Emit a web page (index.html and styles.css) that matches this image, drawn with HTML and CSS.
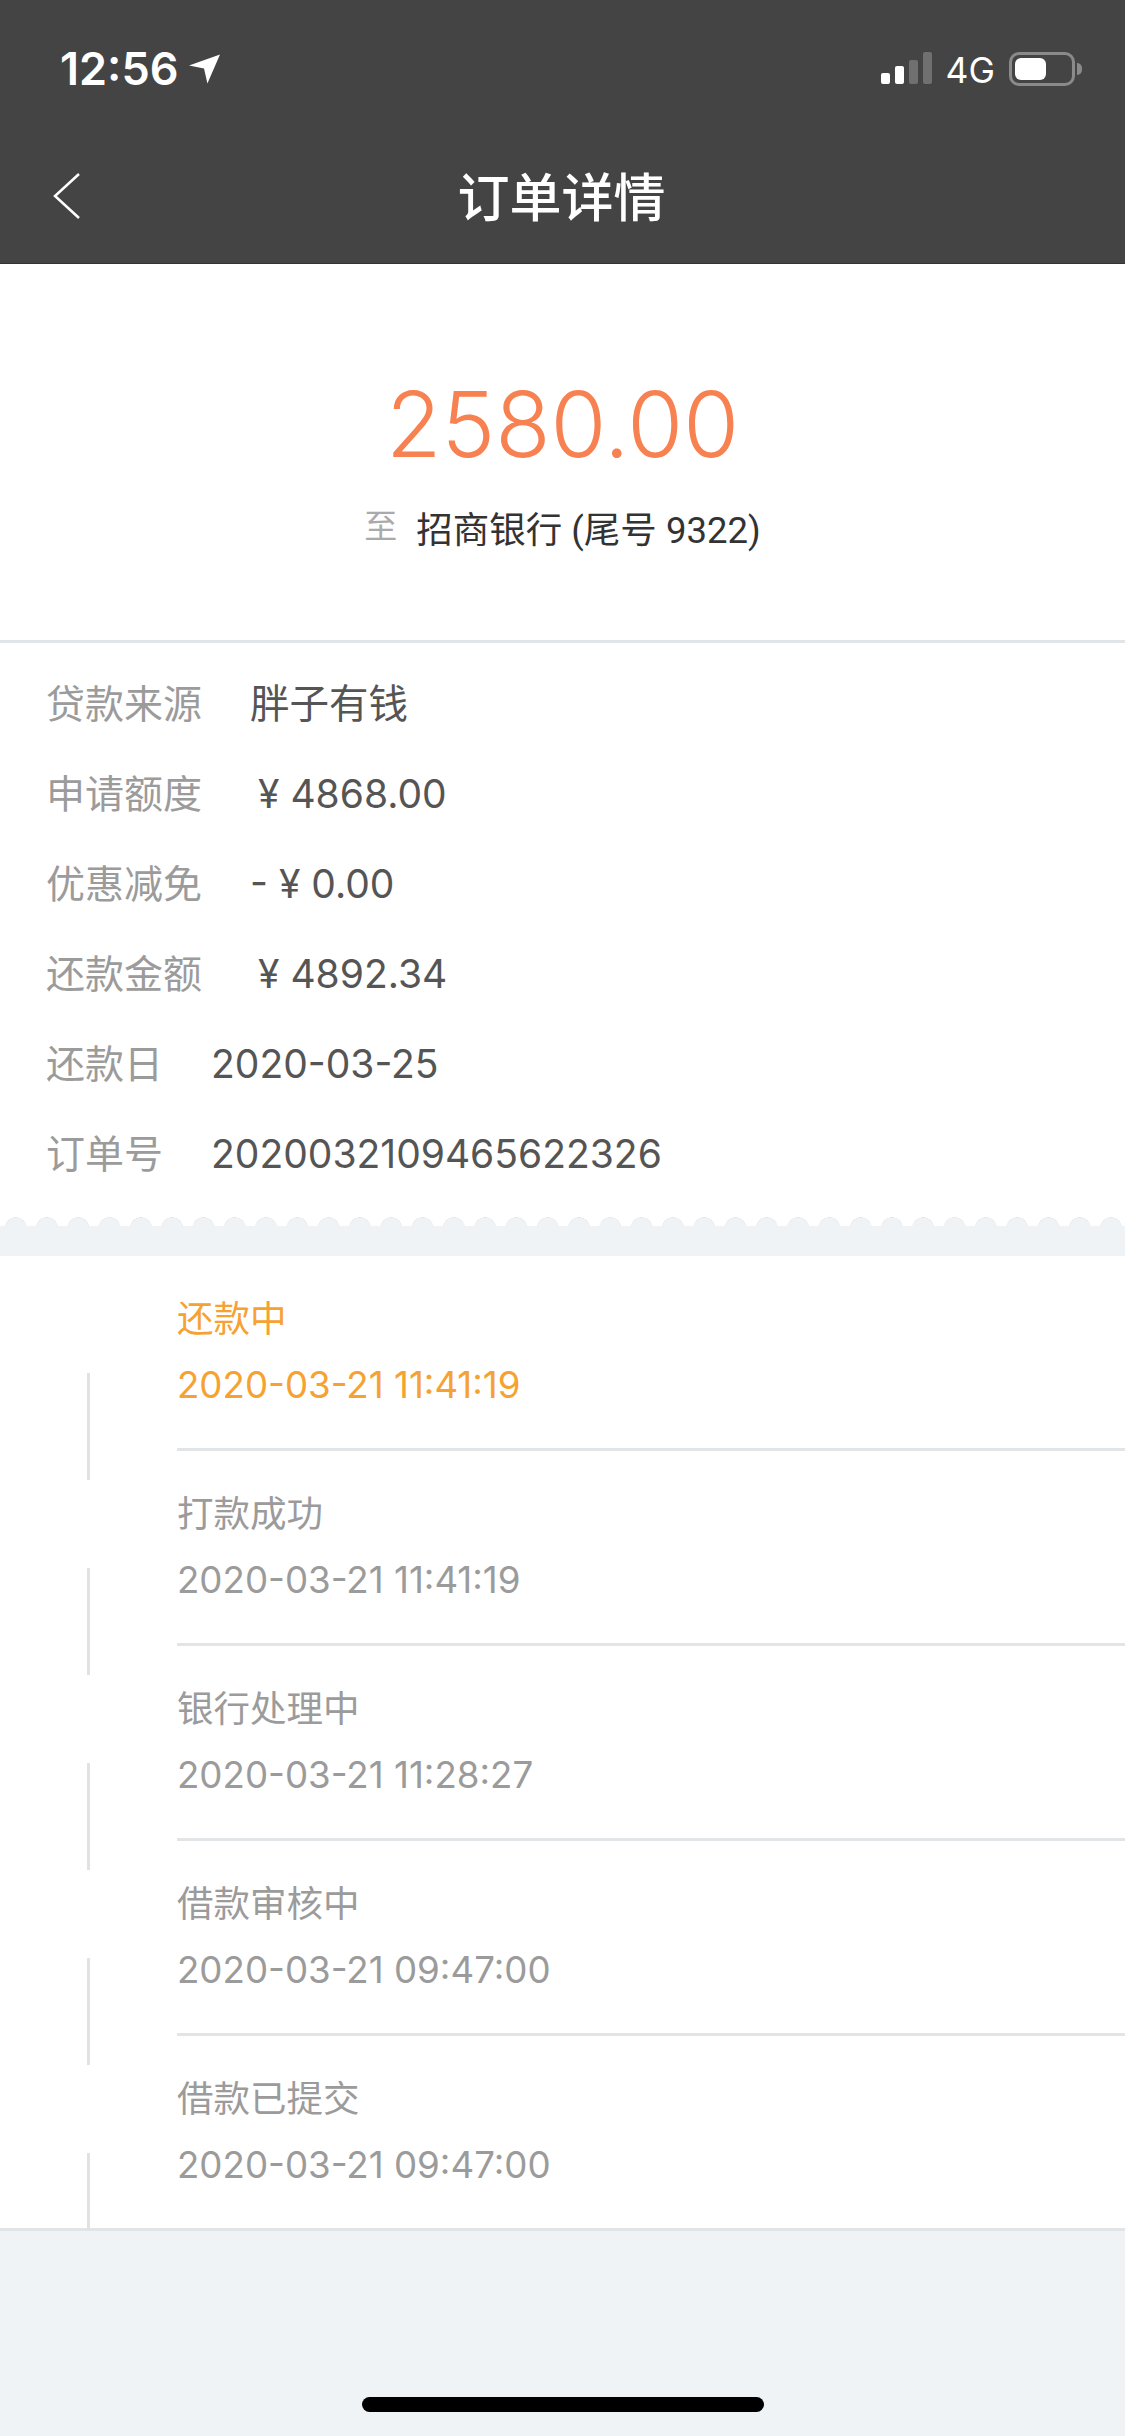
FILE: index.html
```html
<!DOCTYPE html>
<html lang="zh-CN">
<head>
  <meta charset="UTF-8" />
  <meta name="viewport" content="width=device-width, initial-scale=1.0"/>
  <title>订单详情</title>
  <link rel="stylesheet" href="styles.css">
</head>
<body>
  <div class="page">
    <header class="topbar">
      <div class="status">
        <div class="status-left">
          <span class="clock">12:56</span>
          <svg class="arrow" width="31" height="30" viewBox="0 0 32 30"><path d="M32 0 L19 30 L15.5 14.5 L0 11.5 Z" fill="#fff"/></svg>
        </div>
        <div class="status-right">
          <div class="signal">
            <i class="bar bar-1"></i>
            <i class="bar bar-2"></i>
            <i class="bar bar-3"></i>
            <i class="bar bar-4"></i>
          </div>
          <span class="network">4G</span>
          <div class="battery">
            <div class="battery-body"><div class="battery-level"></div></div>
            <div class="battery-cap"></div>
          </div>
        </div>
      </div>
      <nav class="navbar">
        <svg class="back" width="28" height="46" viewBox="0 0 28 46"><path d="M26 1 L2 23 L26 45" fill="none" stroke="#fff" stroke-width="2.5"/></svg>
        <h1>订单详情</h1>
      </nav>
    </header>

    <section class="hero">
      <div class="amount">2580.00</div>
      <div class="bank">
        <span class="bank-to">至</span>
        <span class="bank-name">招商银行 (尾号 9322)</span>
      </div>
    </section>

    <section class="info">
      <div class="row"><span class="label">贷款来源</span><span class="value">胖子有钱</span></div>
      <div class="row"><span class="label">申请额度</span><span class="value num money">¥ 4868.00</span></div>
      <div class="row"><span class="label">优惠减免</span><span class="value num">- ¥ 0.00</span></div>
      <div class="row"><span class="label">还款金额</span><span class="value num money">¥ 4892.34</span></div>
      <div class="row"><span class="label">还款日</span><span class="value num">2020-03-25</span></div>
      <div class="row"><span class="label">订单号</span><span class="value num">2020032109465622326</span></div>
    </section>

    <div class="scallop"></div>
    <div class="gap"></div>

    <section class="timeline">
      <div class="step active">
        <div class="step-title">还款中</div>
        <div class="step-time">2020-03-21 11:41:19</div>
      </div>
      <div class="step">
        <div class="step-title">打款成功</div>
        <div class="step-time">2020-03-21 11:41:19</div>
      </div>
      <div class="step">
        <div class="step-title">银行处理中</div>
        <div class="step-time">2020-03-21 11:28:27</div>
      </div>
      <div class="step">
        <div class="step-title">借款审核中</div>
        <div class="step-time">2020-03-21 09:47:00</div>
      </div>
      <div class="step last">
        <div class="step-title">借款已提交</div>
        <div class="step-time">2020-03-21 09:47:00</div>
      </div>
    </section>

    <footer class="bottom">
      <div class="home-bar"></div>
    </footer>
  </div>
</body>
</html>
```

FILE: styles.css
```css
:root {
  --bg: #eff3f5;
  --line: #e2e5e8;
  --orange: #f78150;
  --amber: #f6a232;
  --gray: #9b9b9b;
}

* {
  box-sizing: border-box;
}

body {
  margin: 0;
  padding: 0;
  font-family: Inter, "Noto Sans CJK SC", sans-serif;
  background: var(--bg);
}

.page {
  width: 1125px;
  height: 2436px;
  display: flex;
  flex-direction: column;
  overflow: hidden;
}

/* status bar + nav */
.topbar {
  height: 264px;
  background: #444;
  color: #fff;
  border-bottom: 1px solid #333;
}

.status {
  display: flex;
  justify-content: space-between;
  align-items: flex-end;
  height: 86px;
  padding: 0 43px 0 60px;
}

.status-left {
  display: flex;
  align-items: center;
  gap: 10px;
}

.clock {
  font-size: 45px;
  font-weight: 600;
  line-height: 44px;
  margin-bottom: -5px;
}

.arrow {
  margin-top: 4px;
}

.status-right {
  display: flex;
  align-items: flex-end;
}

.signal {
  display: flex;
  align-items: flex-end;
  gap: 5px;
  margin-bottom: 2px;
}

.bar {
  width: 9px;
  background: #fff;
  border-radius: 2px;
}

.bar-1 { height: 11px; }
.bar-2 { height: 18px; }
.bar-3 { height: 24px; background: #707070; }
.bar-4 { height: 32px; background: #707070; }

.network {
  font-size: 35.5px;
  line-height: 36px;
  margin: 0 14px -3px;
}

.battery {
  display: flex;
  align-items: center;
}

.battery-body {
  width: 66px;
  height: 34px;
  padding: 3px;
  border: 3px solid #8a8a8a;
  border-radius: 10px;
}

.battery-level {
  width: 31px;
  height: 22px;
  background: #fff;
  border-radius: 6px;
}

.battery-cap {
  width: 5px;
  height: 12px;
  margin-left: 2px;
  background: #8a8a8a;
  border-radius: 0 5px 5px 0;
}

.navbar {
  position: relative;
  display: flex;
  justify-content: center;
  align-items: center;
  height: 177px;
  padding: 49px 2px 0 0;
}

.navbar h1 {
  margin: 0;
  font-size: 52px;
  font-weight: 500;
  line-height: 60px;
}

.back {
  position: absolute;
  left: 53px;
  top: 87px;
}

/* amount */
.hero {
  height: 379px;
  padding-top: 100px;
  background: #fff;
  border-bottom: 3px solid var(--line);
  text-align: center;
}

.amount {
  font-size: 90.5px;
  font-weight: 300;
  line-height: 120px;
  color: var(--orange);
}

.bank {
  display: flex;
  justify-content: center;
  align-items: center;
  gap: 19px;
  margin-top: 17px;
}

.bank-to {
  font-size: 33px;
  color: #aaa;
  margin-top: -7px;
}

.bank-name {
  font-family: Roboto, "Noto Sans CJK SC", sans-serif;
  font-size: 36.5px;
  color: #333;
}

/* order fields */
.info {
  padding: 16px 0 18px;
  background: #fff;
}

.row {
  display: flex;
  align-items: center;
  gap: 48px;
  height: 90px;
  padding-left: 46px;
}

.label {
  font-size: 39px;
  color: var(--gray);
  margin-top: -7px;
}

.value {
  font-size: 39.5px;
  color: #555;
  margin-top: -7px;
}

.num {
  font-size: 39px;
  margin-top: -2px;
}

.money {
  margin-left: 8px;
}

.scallop {
  height: 9px;
  background-color: #fff;
  background-image: radial-gradient(circle 11px at 50% 11px, var(--bg) 0, var(--bg) 10px, #e3e6e8 10.5px, transparent 11px);
  background-size: 31.3px 9px;
  background-repeat: repeat-x;
}

.gap {
  height: 30px;
  background: var(--bg);
}

/* progress list */
.timeline {
  padding-left: 177px;
  background: #fff;
  border-bottom: 3px solid var(--line);
}

.step {
  position: relative;
  height: 195px;
  padding-top: 35px;
  border-bottom: 3px solid var(--line);
  color: var(--gray);
}

.step.active {
  color: var(--amber);
}

.step.last {
  height: 192px;
  border-bottom: none;
}

.step::before {
  content: "";
  position: absolute;
  left: -90px;
  top: 117px;
  width: 3px;
  height: 107px;
  background: #e2e2e2;
}

.step.last::before {
  height: 77px;
}

.step-title {
  font-size: 36.5px;
  line-height: 56px;
}

.step-time {
  font-size: 36.7px;
  line-height: 56px;
  margin-top: 10px;
}

.bottom {
  flex: 1;
  display: flex;
  justify-content: center;
  align-items: flex-end;
  padding-bottom: 24px;
}

.home-bar {
  width: 402px;
  height: 15px;
  background: #000;
  border-radius: 8px;
}
```
